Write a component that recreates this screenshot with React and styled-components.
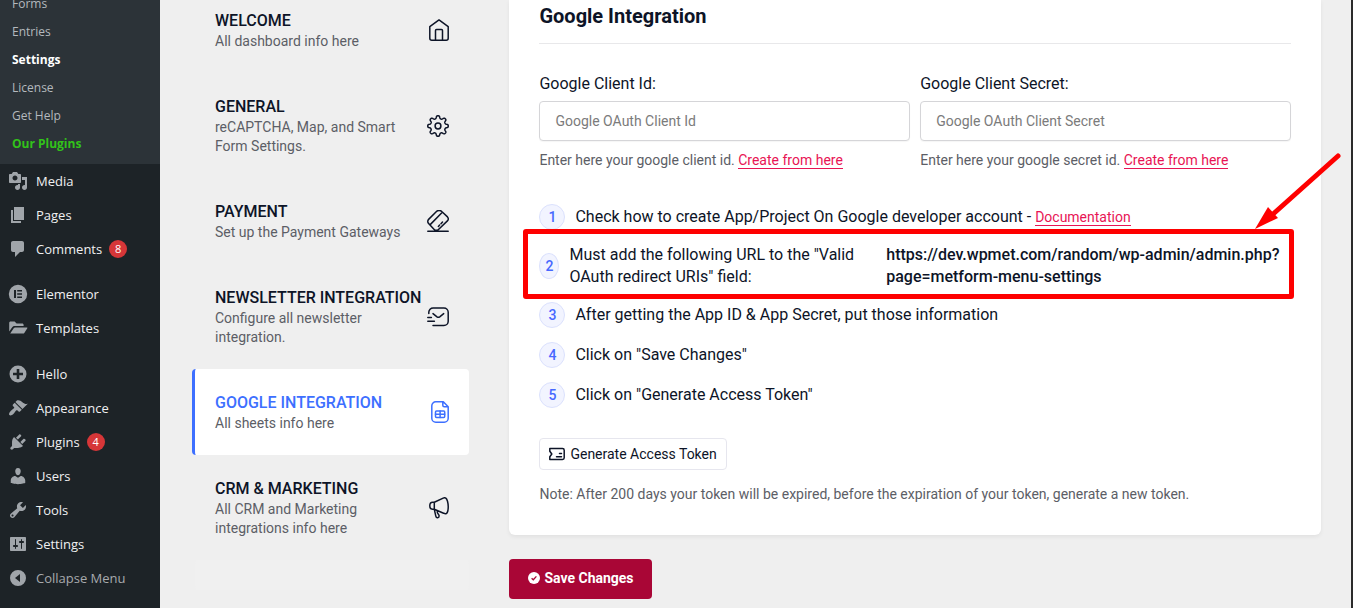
import React from "react";
import styled, { createGlobalStyle, css } from "styled-components";

const GlobalStyle = createGlobalStyle`
    * {
        box-sizing: border-box;
    }
    body {
        margin: 0;
        background: #efefef;
        font-family: Roboto, "Liberation Sans", sans-serif;
        color: #0d1427;
        overflow: hidden;
    }
    ul, ol {
        list-style: none;
        margin: 0;
        padding: 0;
    }
    h2, h3, p {
        margin: 0;
    }
`;

const Page = styled.div`
    display: flex;
    height: 100vh;
    overflow: hidden;
    border-right: 2px solid #2b2b2b;
`;

// WordPress admin menu

const Sidebar = styled.nav`
    flex: 0 0 160px;
    background: #1d2327;
    font-family: "Open Sans", "Noto Sans", sans-serif;
    font-size: 13px;
`;

const SubMenu = styled.ul`
    margin-top: -10px;
    padding-bottom: 6px;
    background: #2c3338;
`;

const SubLink = styled.a`
    display: block;
    padding: 0 12px;
    font-size: 12px;
    line-height: 28px;
    text-decoration: none;
    color: ${props => props.$color || '#b4b9be'};
    font-weight: ${props => props.$bold ? 700 : 400};
`;

const MenuGroup = styled.div`
    padding-top: ${props => props.$gap}px;
`;

const menuItem = css`
    display: flex;
    align-items: center;
    gap: 8px;
    width: 100%;
    height: 34px;
    padding: 0 8px;
    color: #f0f0f1;
    text-decoration: none;
    svg {
        flex: none;
        width: 20px;
        height: 20px;
        fill: #a0a5aa;
    }
`;

const MenuLink = styled.a`
    ${menuItem}
`;

const CollapseButton = styled.button`
    ${menuItem}
    border: none;
    background: none;
    font: inherit;
    color: #a7aaad;
`;

const Count = styled.span`
    width: 18px;
    height: 18px;
    margin-left: -1px;
    border-radius: 9px;
    background: #d63638;
    color: #fff;
    font-size: 11px;
    line-height: 18px;
    text-align: center;
`;

// Settings

const Main = styled.main`
    flex: 1;
    display: flex;
    align-items: flex-start;
    gap: 40px;
    min-width: 0;
    padding: 0 30px 0 32px;
`;

const Tabs = styled.nav`
    flex: 0 0 277px;
    margin-top: -13px;
`;

const Tab = styled.a`
    display: flex;
    align-items: center;
    gap: 6px;
    padding: 22px 20px;
    border-left: 3px solid ${props => props.$active ? '#3d6fff' : 'transparent'};
    border-radius: 4px;
    background: ${props => props.$active ? '#fff' : 'transparent'};
    color: ${props => props.$active ? '#3d6fff' : '#0d1427'};
    text-decoration: none;
    svg {
        flex: none;
        fill: none;
        stroke: currentColor;
        stroke-width: 1.5;
        stroke-linecap: round;
        stroke-linejoin: round;
    }
`;

const TabText = styled.div`
    flex: 1;
    min-width: 0;
    padding-top: 1px;
`;

const TabTitle = styled.h3`
    font-size: 16px;
    font-weight: 500;
    line-height: 22px;
    white-space: nowrap;
`;

const TabInfo = styled.p`
    font-size: 14px;
    line-height: 19px;
    color: #5c5e66;
`;

const TabsEnd = styled.div`
    height: 30px;
    margin-left: 3px;
    border-radius: 4px;
    background: #f0f0f0;
`;

const Form = styled.form`
    flex: 1;
    min-width: 0;
`;

const Card = styled.section`
    padding: 0 30px 30px;
    border-radius: 0 0 6px 6px;
    background: #fff;
    box-shadow: 0 2px 4px rgba(0, 0, 0, 0.06);
`;

const CardTitle = styled.h2`
    padding: 4px 0 15px;
    border-bottom: 1px solid #e8e8ea;
    font-size: 20px;
    font-weight: 700;
    line-height: 24px;
`;

const Fields = styled.div`
    display: grid;
    grid-template-columns: 1fr 1fr;
    gap: 10px;
    padding-top: 29px;
`;

const Label = styled.label`
    display: block;
    margin-bottom: 6px;
    font-size: 16px;
    line-height: 22px;
`;

const Input = styled.input`
    display: block;
    width: 100%;
    height: 40px;
    padding: 0 15px;
    border: 1px solid #d5d5d8;
    border-radius: 4px;
    background: #fff;
    box-shadow: 0 1px 1px rgba(0, 0, 0, 0.04);
    font-family: inherit;
    font-size: 14px;
    outline: none;
    &::placeholder {
        color: #7b7b7b;
        opacity: 1;
    }
`;

const Help = styled.p`
    margin-top: 10px;
    font-size: 14px;
    line-height: 19px;
    color: #5c5e66;
`;

const PinkLink = styled.a`
    border-bottom: 1px solid #e81454;
    font-size: 14px;
    line-height: 16px;
    text-decoration: none;
    color: #e81454;
`;

const Steps = styled.ol`
    display: grid;
    gap: 14px;
    margin-top: 34px;
    font-size: 16px;
    line-height: 22px;
`;

const Step = styled.li`
    position: relative;
    display: flex;
    align-items: center;
    gap: 10px;
`;

const StepNumber = styled.span`
    flex: 0 0 ${props => props.$narrow ? 20 : 26}px;
    height: 26px;
    border: 1px solid #dbe1fd;
    border-radius: 50%;
    background: #f2f4ff;
    color: #4768ff;
    font-size: 14px;
    font-weight: 500;
    line-height: 24px;
    text-align: center;
`;

const StepText = styled.span`
    flex: 307 1 0;
`;

const StepUrl = styled.strong`
    flex: 405 1 0;
    font-weight: 500;
`;

const Highlight = styled.div`
    position: absolute;
    top: -15px;
    right: -3px;
    bottom: -11px;
    left: -16px;
    border: 5px solid #fe0000;
    border-radius: 3px;
    pointer-events: none;
`;

const Arrow = styled.svg`
    position: absolute;
    right: -50px;
    bottom: 59px;
    pointer-events: none;
`;

const TokenButton = styled.button`
    display: flex;
    align-items: center;
    gap: 5px;
    height: 32px;
    margin-top: 30px;
    padding: 0 9px;
    border: 1px solid #e6e6ee;
    border-radius: 4px;
    background: #fff;
    color: #0d1427;
    font-family: inherit;
    font-size: 14px;
`;

const Note = styled.p`
    margin-top: 15px;
    padding-bottom: 1px;
    font-size: 14px;
    line-height: 19px;
    color: #5c5e66;
`;

const SaveButton = styled.button`
    display: flex;
    align-items: center;
    gap: 4px;
    height: 40px;
    margin-top: 24px;
    padding: 0 18px 2px 19px;
    border: none;
    border-radius: 4px;
    background: #a90636;
    color: #fff;
    font-family: inherit;
    font-size: 14px;
    font-weight: 700;
`;

const submenu = [
    { text: 'Forms' },
    { text: 'Entries' },
    { text: 'Settings', color: '#fff', bold: true },
    { text: 'License' },
    { text: 'Get Help' },
    { text: 'Our Plugins', color: '#32c21a', bold: true },
];

const menu = [
    {
        gap: 0,
        items: [
            { text: 'Media', d: 'M13 11V4c0-.55-.45-1-1-1h-1.67L9 1H5L3.67 3H2c-.55 0-1 .45-1 1v7c0 .55.45 1 1 1h10c.55 0 1-.45 1-1zM7 4.5c1.38 0 2.5 1.12 2.5 2.5S8.38 9.5 7 9.5 4.5 8.38 4.5 7 5.62 4.5 7 4.5zM14 6h5v10.5c0 1.38-1.12 2.5-2.5 2.5S14 17.88 14 16.5s1.12-2.5 2.5-2.5c.17 0 .34.02.5.05V9h-3V6zm-4 8.05V13h2v3.5c0 1.38-1.12 2.5-2.5 2.5S7 17.88 7 16.5 8.12 14 9.5 14c.17 0 .34.02.5.05z' },
            { text: 'Pages', d: 'M6 15V2h10v13H6zm-1 1h8v2H3V5h2v11z' },
            { text: 'Comments', count: 8, d: 'M5 2h9c1.1 0 2 .9 2 2v7c0 1.1-.9 2-2 2h-2l-5 5v-5H5c-1.1 0-2-.9-2-2V4c0-1.1.9-2 2-2z' },
        ],
    },
    {
        gap: 11,
        items: [
            { text: 'Elementor', d: 'M10 .8a9.2 9.2 0 1 0 0 18.4A9.2 9.2 0 0 0 10 .8zM6 6h2v8H6zM9.2 6H14v1.6H9.2zM9.2 9.2H14v1.6H9.2zM9.2 12.4H14V14H9.2z' },
            { text: 'Templates', d: 'M1.2 13.5V5c0-.8.6-1.4 1.4-1.4h4l2 2h5.6c.8 0 1.4.6 1.4 1.4v.9H6.6c-.9 0-1.7.5-2.2 1.2zM2.2 15.6l3.5-5.4c.3-.5.8-.8 1.4-.8h11.7c.5 0 .8.5.5.9l-3 4.6c-.3.4-.7.7-1.2.7z' },
        ],
    },
    {
        gap: 12,
        items: [
            { text: 'Hello', d: 'M10 1.5a8.5 8.5 0 1 0 0 17 8.5 8.5 0 0 0 0-17zM8.7 5h2.6v3.7H15v2.6h-3.7V15H8.7v-3.7H5V8.7h3.7z' },
            { text: 'Appearance', d: 'M14.48 11.06L7.41 3.99l1.5-1.5c.5-.56 2.3-.47 3.51.32 1.21.8 1.43 1.28 2.91 2.1 1.18.64 2.45 1.26 4.45.85zm-.71.71L6.7 4.7 4.93 6.47c-.39.39-.39 1.02 0 1.41l1.06 1.06c.39.39.39 1.03 0 1.42-.6.6-1.43 1.11-2.21 1.69-.35.26-.7.53-1.01.84C1.43 14.23.4 16.08 1.4 17.07c.99 1 2.84-.03 4.18-1.36.31-.31.58-.66.85-1.02.57-.78 1.08-1.61 1.69-2.21.39-.39 1.02-.39 1.41 0l1.06 1.06c.39.39 1.02.39 1.41 0z' },
            { text: 'Plugins', count: 4, d: 'M13.11 4.36L9.87 7.6 8 5.73l3.24-3.24c.35-.34 1.05-.2 1.56.32.52.51.66 1.21.31 1.55zm-8 1.77l.91-1.12 9.01 9.01-1.19.84c-.71.71-2.63 1.16-3.82 1.16H6.14L4.9 17.26c-.59.59-1.54.59-2.12 0-.59-.58-.59-1.53 0-2.12l1.24-1.24v-3.88c0-1.13.4-3.19 1.09-3.89zm7.26 3.97l3.24-3.24c.34-.35 1.04-.21 1.55.31.52.51.66 1.21.31 1.55l-3.24 3.25z' },
            { text: 'Users', d: 'M10 9.25c-2.27 0-2.73-3.44-2.73-3.44C7 4.02 7.82 2 9.97 2c2.16 0 2.98 2.02 2.71 3.81 0 0-.41 3.44-2.68 3.44zm0 2.57L12.72 10c2.39 0 4.52 2.33 4.52 4.53v2.49s-3.65 1.13-7.24 1.13c-3.65 0-7.24-1.13-7.24-1.13v-2.49c0-2.25 1.94-4.48 4.47-4.48z' },
            { text: 'Tools', d: 'M16.68 9.77c-1.34 1.34-3.3 1.67-4.95.99l-5.41 6.52c-.99.99-2.59.99-3.58 0s-.99-2.59 0-3.57l6.52-5.42c-.68-1.65-.35-3.61.99-4.95 1.28-1.28 3.12-1.62 4.72-1.06l-2.89 2.89 2.82 2.82 2.86-2.87c.53 1.58.18 3.39-1.08 4.65zM3.81 16.21c.4.39 1.04.39 1.43 0 .4-.4.4-1.04 0-1.43-.39-.4-1.03-.4-1.43 0-.39.39-.39 1.03 0 1.43z' },
            { text: 'Settings', d: 'M18 16V4c0-.55-.45-1-1-1H3c-.55 0-1 .45-1 1v12c0 .55.45 1 1 1h14c.55 0 1-.45 1-1zM8 11h1c.55 0 1 .45 1 1s-.45 1-1 1H8v1.5c0 .28-.22.5-.5.5s-.5-.22-.5-.5V13H6c-.55 0-1-.45-1-1s.45-1 1-1h1V5.5c0-.28.22-.5.5-.5s.5.22.5.5V11zm5-2h-1c-.55 0-1-.45-1-1s.45-1 1-1h1V5.5c0-.28.22-.5.5-.5s.5.22.5.5V7h1c.55 0 1 .45 1 1s-.45 1-1 1h-1v5.5c0 .28-.22.5-.5.5s-.5-.22-.5-.5V9z' },
        ],
    },
];

// Gear outline with eight rounded teeth
const gearPath = () => {
    const points = [];
    for (let i = 0; i < 144; i++) {
        const a = (i / 144) * Math.PI * 2;
        const r = 8.9 + 1.4 * Math.tanh(1.8 * Math.cos(8 * a));
        points.push(`${(11 + r * Math.sin(a)).toFixed(2)} ${(11 - r * Math.cos(a)).toFixed(2)}`);
    }
    return `M${points.join('L')}Z`;
};

const HomeIcon = () => (
    <svg width="20" height="22" viewBox="0 0 20 22">
        <path d="M.8 7.6 10 .9l9.2 6.7v11.6a2 2 0 0 1-2 2H2.8a2 2 0 0 1-2-2zM6.5 21v-9.5a1 1 0 0 1 1-1h5a1 1 0 0 1 1 1V21" />
    </svg>
);

const GearIcon = () => (
    <svg width="22" height="22" viewBox="0 0 22 22">
        <path d={gearPath()} />
        <circle cx="11" cy="11" r="2.9" />
    </svg>
);

const PaymentIcon = () => (
    <svg width="22" height="22" viewBox="0 0 22 22">
        <path d="M9.2 1.7 1.6 9.4a2.8 2.8 0 0 0 0 4l5.6 6a3 3 0 0 0 4.3.1l8.9-8.6a2.8 2.8 0 0 0 .1-4l-5.5-5.2a4 4 0 0 0-5.8 0zM3.2 14.6 14.6 3M11.4 16.4l1.2-1.3M14 13.7l1.5-1.7M.8 21.2h20.4" />
    </svg>
);

const MailIcon = () => (
    <svg width="22" height="20" viewBox="0 0 22 20">
        <path d="M1.8 6.5V5.3a4.3 4.3 0 0 1 4.3-4.3h10.8a4.3 4.3 0 0 1 4.3 4.3v8.9a4.3 4.3 0 0 1-4.3 4.3H6M6 6.6l4 3.2c.8.6 1.9.6 2.7 0l4-3.2M.8 10.4h3.6M.8 14.2h6.6" />
    </svg>
);

const SheetIcon = () => (
    <svg width="18" height="22" viewBox="0 0 18 22">
        <path d="M.8 4.8a4 4 0 0 1 4-4h7.5l4.9 5v11.4a4 4 0 0 1-4 4H4.8a4 4 0 0 1-4-4zM11.8 1v3.3a1.5 1.5 0 0 0 1.5 1.5H17" />
        <rect x="4.5" y="10" width="9.2" height="6.5" rx="1" />
        <path d="M4.5 13.2h9.2M9.1 10v6.5" />
    </svg>
);

const MegaphoneIcon = () => (
    <svg width="20" height="22" viewBox="0 0 20 22">
        <path d="M5.3 5.3 14.2 1.1C16.3.1 17.6 1.2 18.5 4.3c.9 3.3.9 6.7.3 9.7-.6 2.8-2 3.4-4.2 2.2L5.3 12.3M5.3 5.3H3.6C1.7 5.3.8 6.8.8 8.8s1 3.5 2.8 3.5h1.7zM5.3 12.3l1.5 6.8c.5 2.3 3.4 2 3.3-.3 0-1.5-1.8-2-1.8-3.5v-1.5" />
    </svg>
);

const tabs = [
    { title: 'WELCOME', info: 'All dashboard info here', Icon: HomeIcon },
    { title: 'GENERAL', info: 'reCAPTCHA, Map, and Smart Form Settings.', Icon: GearIcon },
    { title: 'PAYMENT', info: 'Set up the Payment Gateways', Icon: PaymentIcon },
    { title: 'NEWSLETTER INTEGRATION', info: 'Configure all newsletter integration.', Icon: MailIcon },
    { title: 'GOOGLE INTEGRATION', info: 'All sheets info here', Icon: SheetIcon, active: true },
    { title: 'CRM & MARKETING', info: 'All CRM and Marketing integrations info here', Icon: MegaphoneIcon },
];

const AdminMenu = () => (
    <Sidebar>
        <SubMenu>
            {submenu.map(item => (
                <li key={item.text}>
                    <SubLink href="#" $color={item.color} $bold={item.bold}>{item.text}</SubLink>
                </li>
            ))}
        </SubMenu>
        {menu.map(group => (
            <MenuGroup key={group.gap} $gap={group.gap}>
                <ul>
                    {group.items.map(item => (
                        <li key={item.text}>
                            <MenuLink href="#">
                                <svg viewBox="0 0 20 20"><path fillRule="evenodd" d={item.d} /></svg>
                                {item.text}
                                {item.count && <Count>{item.count}</Count>}
                            </MenuLink>
                        </li>
                    ))}
                </ul>
            </MenuGroup>
        ))}
        <CollapseButton type="button">
            <svg viewBox="0 0 20 20">
                <path fillRule="evenodd" d="M10 2a8 8 0 1 0 0 16 8 8 0 0 0 0-16zM12 6v8l-5-4z" />
            </svg>
            Collapse Menu
        </CollapseButton>
    </Sidebar>
);

const SettingsTabs = () => (
    <Tabs>
        {tabs.map(({ title, info, Icon, active }) => (
            <Tab key={title} href="#" $active={active}>
                <TabText>
                    <TabTitle>{title}</TabTitle>
                    <TabInfo>{info}</TabInfo>
                </TabText>
                <Icon />
            </Tab>
        ))}
        <TabsEnd />
    </Tabs>
);

const GoogleForm = () => (
    <Form onSubmit={e => e.preventDefault()}>
        <Card>
            <CardTitle>Google Integration</CardTitle>
            <Fields>
                <div>
                    <Label htmlFor="client-id">Google Client Id:</Label>
                    <Input id="client-id" placeholder="Google OAuth Client Id" />
                    <Help>Enter here your google client id. <PinkLink href="#">Create from here</PinkLink></Help>
                </div>
                <div>
                    <Label htmlFor="client-secret">Google Client Secret:</Label>
                    <Input id="client-secret" placeholder="Google OAuth Client Secret" />
                    <Help>Enter here your google secret id. <PinkLink href="#">Create from here</PinkLink></Help>
                </div>
            </Fields>
            <Steps>
                <Step>
                    <StepNumber>1</StepNumber>
                    <span>Check how to create App/Project On Google developer account - <PinkLink href="#">Documentation</PinkLink></span>
                </Step>
                <Step>
                    <StepNumber $narrow>2</StepNumber>
                    <StepText>Must add the following URL to the "Valid OAuth redirect URIs" field:</StepText>
                    <StepUrl>https://dev.wpmet.com/random/wp-admin/admin.php?page=metform-menu-settings</StepUrl>
                    <Highlight />
                    <Arrow width="86" height="78" viewBox="0 0 86 78">
                        <path d="M83 5 17 64" stroke="#fe0000" strokeWidth="5" strokeLinecap="round" />
                        <path d="M0 78 13 56 23 67z" fill="#fe0000" />
                    </Arrow>
                </Step>
                <Step>
                    <StepNumber>3</StepNumber>
                    <span>After getting the App ID &amp; App Secret, put those information</span>
                </Step>
                <Step>
                    <StepNumber>4</StepNumber>
                    <span>Click on "Save Changes"</span>
                </Step>
                <Step>
                    <StepNumber>5</StepNumber>
                    <span>Click on "Generate Access Token"</span>
                </Step>
            </Steps>
            <TokenButton type="button">
                <svg width="16" height="14" viewBox="0 0 16 14" fill="none" stroke="#0d1427" strokeWidth="1.5" strokeLinecap="round" strokeLinejoin="round">
                    <path d="M.8 1.5h12.7a1.7 1.7 0 0 1 1.7 1.7v7.6a1.7 1.7 0 0 1-1.7 1.7H.8V9.7L2.8 7 .8 4.3zM10.5 6.5h2M7.5 9.7h5" />
                </svg>
                Generate Access Token
            </TokenButton>
            <Note>Note: After 200 days your token will be expired, before the expiration of your token, generate a new token.</Note>
        </Card>
        <SaveButton type="submit">
            <svg width="12" height="12" viewBox="0 0 12 12">
                <circle cx="6" cy="6" r="6" fill="#fff" />
                <path d="m3.6 6.2 1.7 1.6 3.1-3.4" fill="none" stroke="#a90636" strokeWidth="1.3" />
            </svg>
            Save Changes
        </SaveButton>
    </Form>
);

const App = () => {
    return (
        <>
            <GlobalStyle />
            <Page>
                <AdminMenu />
                <Main>
                    <SettingsTabs />
                    <GoogleForm />
                </Main>
            </Page>
        </>
    );
};

export default App;
